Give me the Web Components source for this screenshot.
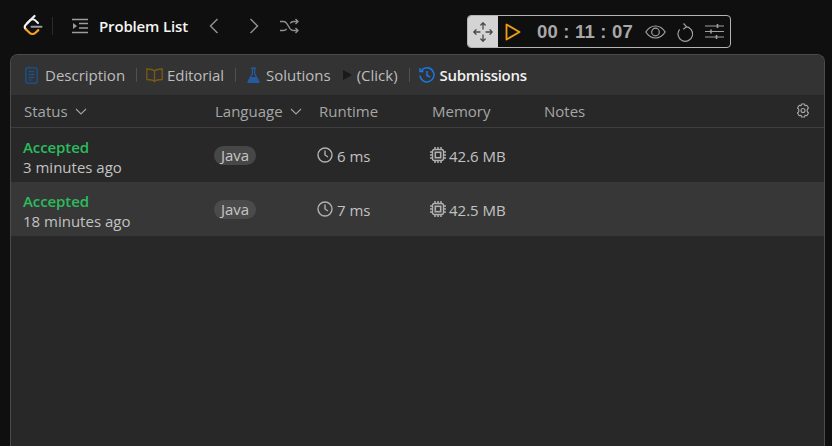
<!DOCTYPE html>
<html><head><meta charset="utf-8"><style>
html,body{margin:0;padding:0;background:#0f0f0f;height:446px;overflow:hidden;font-family:"Open Sans","Noto Sans",sans-serif;}
</style></head><body>
<app-shell></app-shell>
<template id="t-shell"><style>
:host{display:flex;flex-direction:column;height:446px;overflow:hidden}
</style><top-bar></top-bar><submissions-panel></submissions-panel></template>

<template id="t-top"><style>
:host{display:flex;height:54px;flex:none;align-items:center;box-sizing:border-box;padding:0 0 2px 23px;color:#8a8a8a}
svg{display:block;flex:none}
.logo{margin-right:9px}
.div{width:1px;height:18px;background:#2b2b2b;margin-right:19px}
.title{font:600 15px "Open Sans",sans-serif;color:#f5f5f5;margin:0 20px 0 10px;white-space:nowrap;letter-spacing:-.15px}
timer-box{margin:11px 0 0 168px}
</style>
<svg class="logo" width="20" height="24" viewBox="0 0 20 24" fill="none" stroke-linecap="round" stroke-linejoin="round"><path d="M11.500 2 2.800 10.700c-1.300 1.400-1.300 3.100 0 4.500" stroke="#f2f2f2" stroke-width="2.200"/><path d="M3 15.400l3.500 3.400c1.700 1.600 4.300 1.600 6 0l2.800-2.700" stroke="#f89f1b" stroke-width="2.200"/><path d="M15 9 12.500 6.600c-1.700-1.500-4.200-1.500-5.800 0L4 9.300" stroke="#f2f2f2" stroke-width="2"/><path d="M8.500 12.800h10" stroke="#9a9a9a" stroke-width="2"/></svg>
<div class="div"></div>
<svg width="17" height="16" viewBox="0 0 17 16" fill="none" stroke="#9c9c9c" stroke-width="1.300"><path d="M0 1.500h16M7 5.500h9M7 10h9M0 14.500h16"/><path d="M1 5l4 3-4 3z" fill="#9c9c9c" stroke="none"/></svg>
<span class="title">Problem List</span>
<svg style="margin-right:30px" width="11" height="18" viewBox="0 0 11 18" fill="none" stroke="#8f8f8f" stroke-width="1.500"><path d="M9.500 2 2.500 9l7 7"/></svg>
<svg style="margin-right:20px" width="11" height="18" viewBox="0 0 11 18" fill="none" stroke="#8f8f8f" stroke-width="1.500"><path d="m1.500 2 7 7-7 7"/></svg>
<svg width="19" height="16" viewBox="0 0 19 16" fill="none" stroke="#8f8f8f" stroke-width="1.400"><path d="M0 3.500h3.500c1.500 0 2.400.7 3.200 1.800l3.500 5.500c.8 1.100 1.700 1.700 3.300 1.700H18M0 12.500h3.500c1.500 0 2.400-.6 3.200-1.700M10.200 5.300c.8-1.100 1.700-1.800 3.300-1.800H18M15.500 1 18 3.500 15.500 6M15.500 10 18 12.500 15.500 15"/></svg>
<timer-box></timer-box>
</template>

<template id="t-timer"><style>
:host{display:flex;width:264px;height:33px;box-sizing:border-box;border:1px solid #b5b5b5;border-radius:4px;align-items:center;overflow:hidden;background:#0f0f0f}
svg{display:block;flex:none}
.move{width:30px;height:100%;background:#d4d4d4;display:flex;align-items:center;justify-content:center;flex:none}
.play{margin-left:7px}
.time{font:700 18.500px "Liberation Sans",Arial,sans-serif;color:#a8a8a8;margin:0 13px 0 16px;white-space:nowrap;width:95px;letter-spacing:.2px}
.eye{margin-right:11px}.re{margin-right:12px}
</style>
<div class="move"><svg width="22" height="22" viewBox="0 0 22 22" fill="none" stroke="#4a4a4a" stroke-width="1.300" stroke-linecap="round" stroke-linejoin="round"><path d="M11 2v6M8.800 4 11 1.800 13.200 4M11 14v6M8.800 18l2.200 2.200 2.200-2.200M2 11h6M4 8.800 1.800 11 4 13.200M14 11h6M18 8.800l2.200 2.200-2.200 2.200"/></svg></div>
<svg class="play" width="16" height="18" viewBox="0 0 16 18" fill="none" stroke="#f39c12" stroke-width="1.800" stroke-linejoin="round"><path d="M1.500 1.500v15L14.500 9z"/></svg>
<span class="time">00 : 11 : 07</span>
<svg class="eye" width="21" height="14" viewBox="0 0 21 14" fill="none" stroke="#a0a0a0" stroke-width="1.200"><path d="M.8 7C3.500 2.800 6.700 1 10.500 1s7 1.800 9.700 6c-2.700 4.200-5.900 6-9.700 6S3.500 11.200.8 7z"/><circle cx="10.500" cy="7" r="3.800"/></svg>
<svg class="re" width="16" height="20" viewBox="0 0 16 20" fill="none" stroke="#a0a0a0" stroke-width="1.200"><path d="M8.500 4.700a7.300 7.300 0 1 1-5.800 2.600M6.500 1.500 9.500 4.700 6.300 7.200"/></svg>
<svg width="19" height="17" viewBox="0 0 19 17" fill="none" stroke="#a0a0a0" stroke-width="1.200"><path d="M0 3h19M0 8.500h19M0 14h19"/><path d="M12.500 1v4M6 6.500v4M11.500 12v4" stroke-width="1.600"/></svg>
</template>

<template id="t-panel"><style>
:host{display:block;margin:0 7px 0 10px;height:410px;flex:none;box-sizing:border-box;border:1px solid #4b4b4b;border-bottom:0;border-radius:8px 8px 0 0;background:#282828;overflow:hidden}
.tabs{display:flex;align-items:center;height:40px;background:#333;padding-left:14px;color:#bdbdbd;font-size:15px;box-sizing:border-box}
svg{display:block;flex:none}
.tab{display:flex;align-items:center;white-space:nowrap}
.sep{width:1px;height:14px;background:#505050;margin:0 9px 0 11px}
.head{display:grid;grid-template-columns:191px 104px 113px 112px 1fr;align-items:center;height:32px;padding-left:13px;font-size:15px;color:#a6a6a6;border-bottom:1px solid #3e3e3e;position:relative}
.h{display:flex;align-items:center;gap:7px}
.gear{position:absolute;right:14px;top:8px}
</style>
<div class="tabs">
<span class="tab"><svg style="margin-right:7px" width="13" height="17" viewBox="0 0 13 17" fill="none" stroke="#1c4f86" stroke-width="1.500"><rect x=".8" y=".8" width="11.400" height="15.400" rx="2"/><path d="M3.500 4.500h6M3.500 7.500h6M3.500 10.500h6M3.500 13h3"/></svg>Description</span><span class="sep"></span>
<span class="tab"><svg style="margin-right:4px" width="17" height="15" viewBox="0 0 17 15" fill="none" stroke="#7a5a12" stroke-width="1.300"><path d="M8.500 3C7 1.500 4.500 1 .8 1v10.500c3.700 0 6.200.5 7.700 2 1.500-1.500 4-2 7.700-2V1C12.500 1 10 1.500 8.500 3zM8.500 3v10.500"/></svg><span style="letter-spacing:-.1px">Editorial</span></span><span class="sep" style="margin-right:11px"></span>
<span class="tab"><svg style="margin-right:6px" width="13" height="17" viewBox="0 0 13 17"><path d="M4 .5h5v1.200h-.7v5l4.200 7.500c.5 1 0 1.800-1 1.800H1.500c-1 0-1.500-.8-1-1.800l4.200-7.500v-5H4zM6 2v5.200L4.300 10h4.400L7 7.200V2z" fill="#255a9c" fill-rule="evenodd"/></svg>Solutions</span>
<span class="tab" style="margin-left:11px"><svg style="margin-right:4px" width="11" height="12" viewBox="0 0 11 12"><path d="M1 1l9 5-9 5z" fill="#1a1a1a"/></svg>(Click)</span><span class="sep"></span>
<span class="tab" style="font-weight:600;color:#f2f2f2;letter-spacing:-.3px"><svg style="margin-right:5px" width="16" height="16" viewBox="0 0 16 16" fill="none" stroke="#1679e6" stroke-width="1.500"><path d="M2.500 3.500A7 7 0 1 1 1 8.500M1 1v3.500h3.500M8 4v4.500l3 1.500"/></svg>Submissions</span>
</div>
<div class="head">
<span class="h">Status<svg width="12" height="7" viewBox="0 0 12 7" fill="none" stroke="#a0a0a0" stroke-width="1.100"><path d="m1 1 5 5 5-5"/></svg></span>
<span class="h">Language<svg width="12" height="7" viewBox="0 0 12 7" fill="none" stroke="#a0a0a0" stroke-width="1.100"><path d="m1 1 5 5 5-5"/></svg></span>
<span class="h">Runtime</span><span class="h">Memory</span><span class="h">Notes</span>
<svg class="gear" width="14" height="15" viewBox="0 0 14 15" fill="none" stroke="#a8a8a8" stroke-width="1.100" stroke-linejoin="round"><path d="M5.500 1h3l.5 1.800 1.800-.5L12.500 5l-1.300 1.300v2.400L12.500 10l-1.700 2.700-1.800-.5-.5 1.800h-3L5 12.200l-1.800.5L1.500 10l1.300-1.300V6.300L1.500 5l1.700-2.700 1.800.5z"/><circle cx="7" cy="7.500" r="2"/></svg>
</div>
<sub-row ago="3 minutes ago" rt="6 ms" mem="42.6 MB"></sub-row>
<sub-row ago="18 minutes ago" rt="7 ms" mem="42.5 MB" alt></sub-row>
</template>

<template id="t-row"><style>
:host{display:grid;grid-template-columns:191px 103px 113px 112px 1fr;height:54px;padding-left:12px;align-items:center;font-size:15px;color:#c2c2c2;background:#282828}
:host([alt]){background:#373737}
svg{display:block;flex:none}
.st{padding-top:3px}
.acc{color:#2cbb5d;font-weight:600;line-height:20px;letter-spacing:-.1px}
.ago{line-height:20px;white-space:nowrap}
.pill{display:inline-block;height:19px;line-height:19px;padding:0 7px;border-radius:10px;background:#474747;font-size:15px;color:#c6c6c6}
:host([alt]) .pill{background:#4b4b4b}
.c{display:flex;align-items:center;gap:4px;white-space:nowrap;padding-top:1px}
.c svg{stroke-width:1.400;margin-top:-1px}
</style>
<div class="st"><div class="acc">Accepted</div><div class="ago"></div></div>
<div><span class="pill">Java</span></div>
<div class="c"><svg width="16" height="16" viewBox="0 0 16 16" fill="none" stroke="#b0b0b0"><circle cx="8" cy="8" r="7"/><path d="M8 3.500V8l3 2"/></svg><span class="rt"></span></div>
<div class="c" style="gap:3px"><svg width="16" height="16" viewBox="0 0 16 16" fill="none" stroke="#b0b0b0"><rect x="2.500" y="2.500" width="11" height="11" rx="2"/><rect x="5.300" y="5.300" width="5.400" height="5.400" stroke-width="1.600"/><path stroke-width="1.500" d="M5 0v2.500M8 0v2.500M11 0v2.500M5 13.500V16M8 13.500V16M11 13.500V16M0 5h2.500M0 8h2.500M0 11h2.500M13.500 5H16M13.500 8H16M13.500 11H16"/></svg><span class="mem"></span></div>
</template>

<script>
function def(name,tid,init){customElements.define(name,class extends HTMLElement{constructor(){super();this.attachShadow({mode:"open"}).appendChild(document.getElementById(tid).content.cloneNode(true));}connectedCallback(){if(init)init(this)}})}
def("timer-box","t-timer");
def("sub-row","t-row",e=>{const s=e.shadowRoot;s.querySelector(".ago").textContent=e.getAttribute("ago");s.querySelector(".rt").textContent=e.getAttribute("rt");s.querySelector(".mem").textContent=e.getAttribute("mem");});
def("top-bar","t-top");
def("submissions-panel","t-panel");
def("app-shell","t-shell");
</script>
</body></html>
